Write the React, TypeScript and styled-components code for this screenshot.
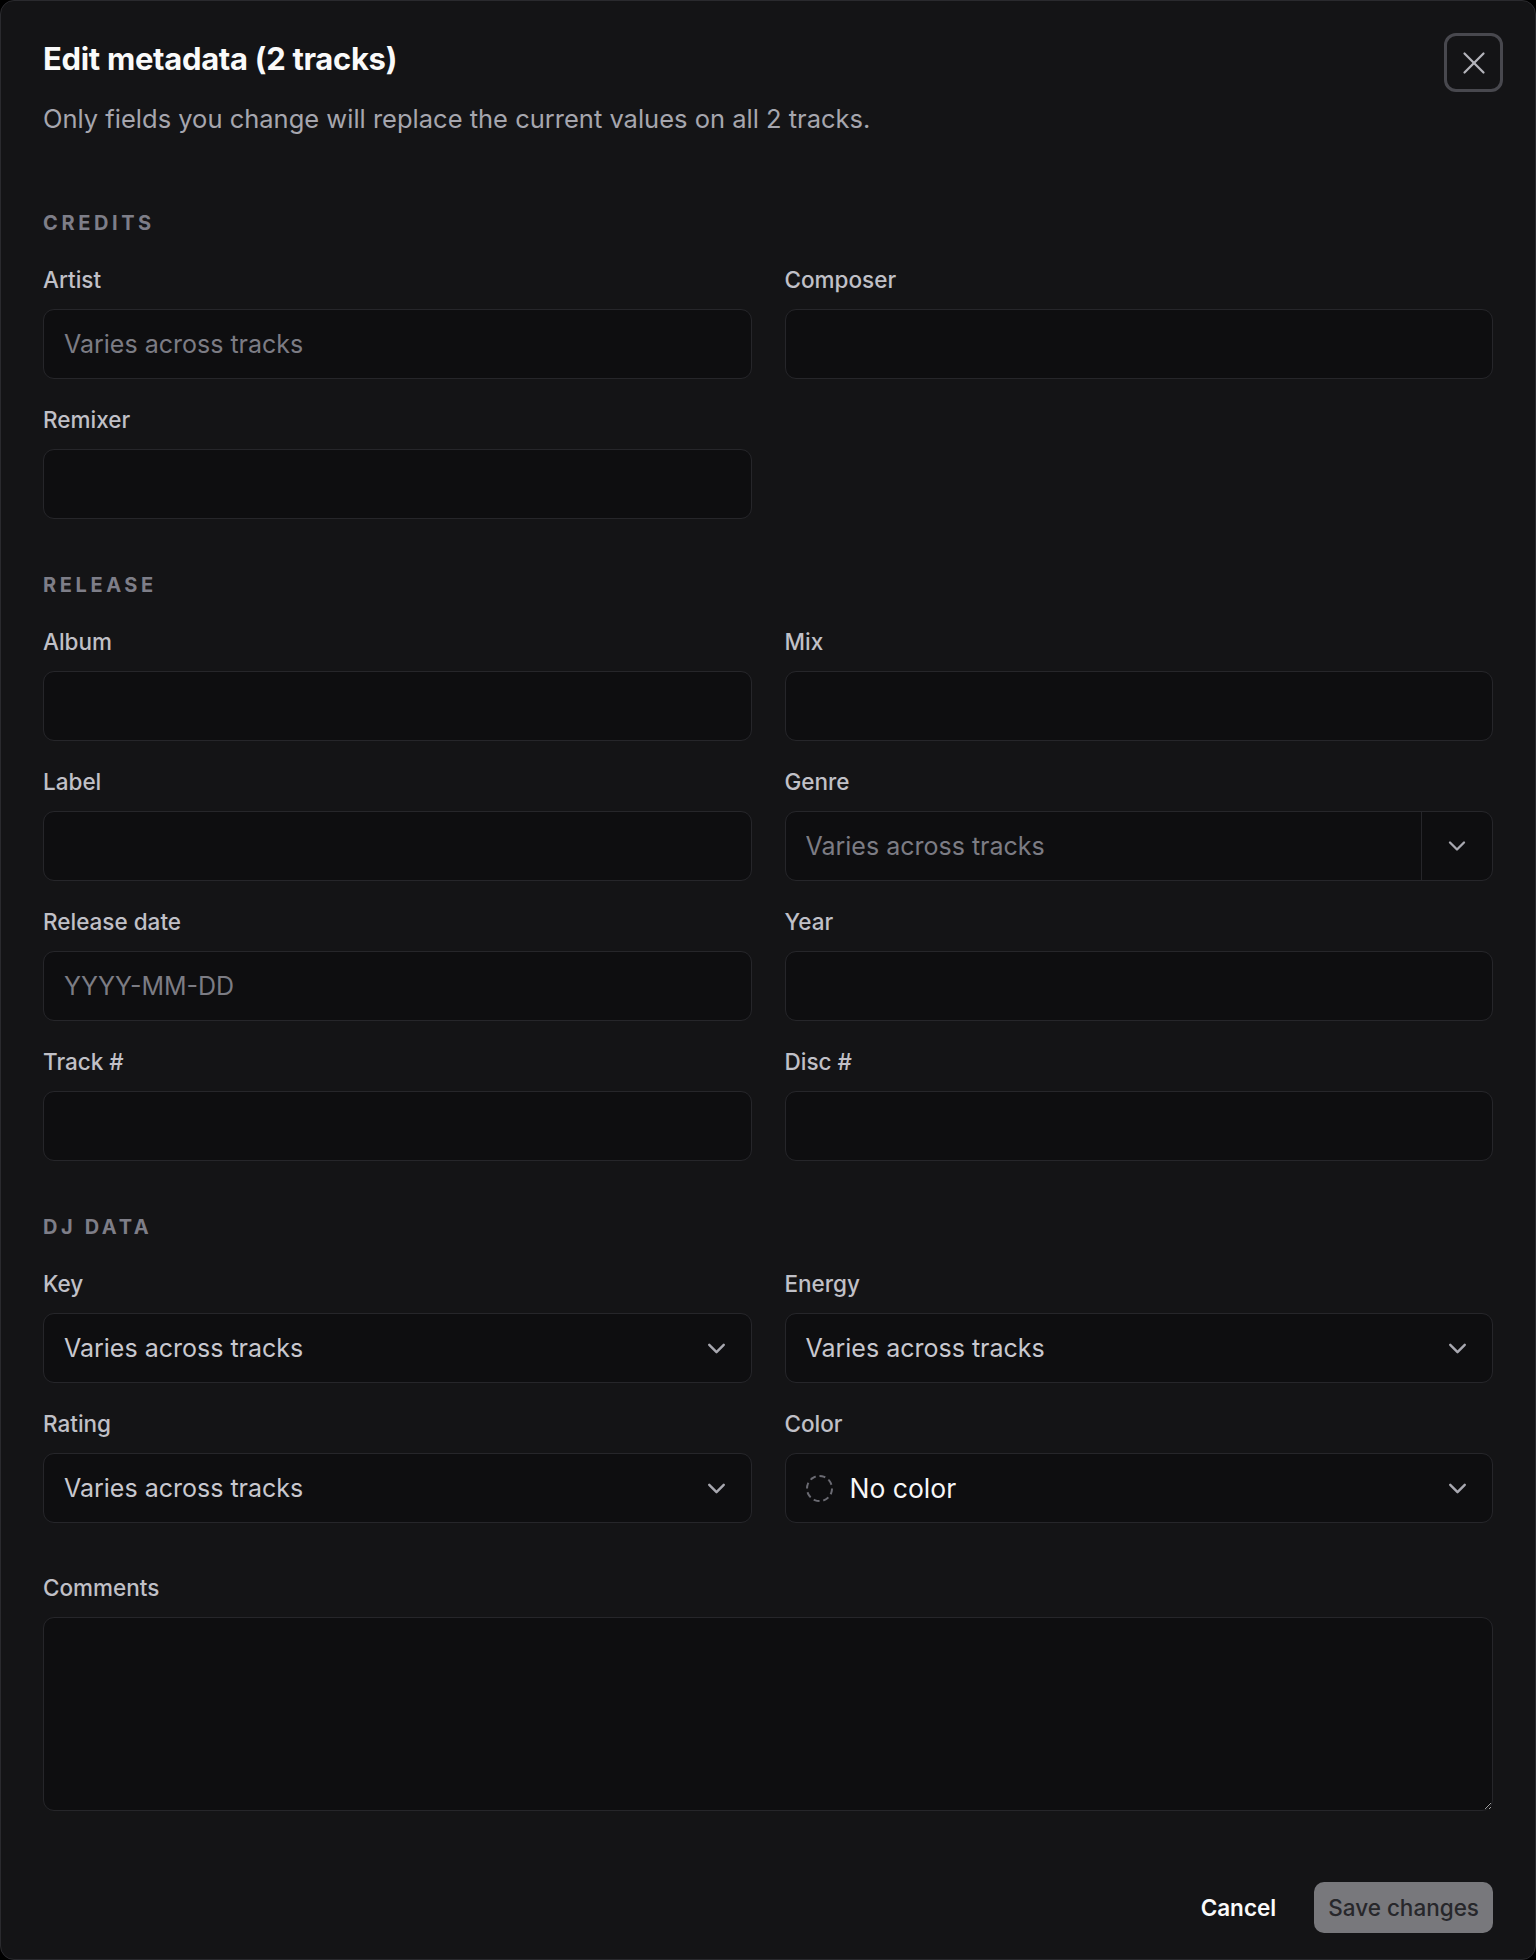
import styled, { createGlobalStyle } from 'styled-components'
import { ChevronDown, X } from 'lucide-react'

const GlobalStyle = createGlobalStyle`
  html, body {
    margin: 0;
    padding: 0;
    background: #000;
  }
  * {
    box-sizing: border-box;
  }
  body {
    font-family: Inter, "Noto Sans", "Liberation Sans", sans-serif;
  }
`

const Dialog = styled.div`
  position: relative;
  width: 1536px;
  height: 1960px;
  padding: 40px 42px 0;
  background: #141416;
  border: 1.5px solid #2a2a2e;
  border-radius: 14px;
  color: #f4f4f5;
`

const Title = styled.h2`
  margin: 0;
  font-size: 31px;
  line-height: 36px;
  font-weight: 700;
  letter-spacing: -0.01em;
  color: #fafafa;
`

const Subtitle = styled.p`
  margin: 26px 0 0;
  font-size: 25.5px;
  line-height: 32px;
  color: #a6a6ae;
`

const CloseButton = styled.button`
  position: absolute;
  top: 32px;
  right: 32px;
  width: 59px;
  height: 59px;
  display: flex;
  align-items: center;
  justify-content: center;
  background: transparent;
  border: 3px solid #48484e;
  border-radius: 12px;
  color: #b4b4bb;
  padding: 0;
`

const Section = styled.section<{ $gap: number }>`
  margin-top: ${(p) => p.$gap}px;
`

const SectionHeader = styled.h3`
  margin: 0 0 31px;
  font-size: 20px;
  line-height: 24px;
  font-weight: 700;
  letter-spacing: 0.18em;
  text-transform: uppercase;
  color: #7e7e88;
`

const Grid = styled.div`
  display: grid;
  grid-template-columns: 1fr 1fr;
  column-gap: 33px;
  row-gap: 27px;
`

const Field = styled.div`
  display: flex;
  flex-direction: column;
  gap: 15px;
`

const Label = styled.label`
  font-size: 22.5px;
  line-height: 28px;
  font-weight: 500;
  color: #c0c0c7;
`

const boxStyles = `
  height: 70px;
  width: 100%;
  background: #0e0e10;
  border: 1.5px solid #26262a;
  border-radius: 11px;
  font-family: inherit;
  font-size: 25px;
`

const Input = styled.input`
  ${boxStyles}
  padding: 0 20px;
  color: #e4e4e7;
  outline: none;

  &::placeholder {
    color: #7c7c84;
  }
`

const Combo = styled.div`
  ${boxStyles}
  display: flex;
  align-items: stretch;
  overflow: hidden;
`

const ComboInput = styled.input`
  flex: 1;
  min-width: 0;
  background: transparent;
  border: none;
  outline: none;
  padding: 0 20px;
  font-family: inherit;
  font-size: 25px;
  color: #e4e4e7;

  &::placeholder {
    color: #7c7c84;
  }
`

const ComboTrigger = styled.button`
  width: 71px;
  display: flex;
  align-items: center;
  justify-content: center;
  background: transparent;
  border: none;
  border-left: 1.5px solid #26262a;
  color: #a8a8b0;
  padding: 0;
`

const Select = styled.button`
  ${boxStyles}
  display: flex;
  align-items: center;
  gap: 17px;
  padding: 0 20px 0 20px;
  text-align: left;
`

const SelectValue = styled.span<{ $bright?: boolean }>`
  flex: 1;
  font-size: ${(p) => (p.$bright ? '26.5px' : '25px')};
  color: ${(p) => (p.$bright ? '#f7f7f8' : '#c8c8cf')};
`

const Chevron = styled(ChevronDown)`
  color: #a8a8b0;
  flex-shrink: 0;
`

const Swatch = styled.span`
  width: 27px;
  height: 27px;
  border-radius: 50%;
  border: 2px dashed #6b6b73;
  flex-shrink: 0;
`

const TextArea = styled.textarea`
  height: 194px;
  width: 100%;
  background: #0e0e10;
  border: 1.5px solid #26262a;
  border-radius: 11px;
  padding: 16px 20px;
  font-family: inherit;
  font-size: 25px;
  color: #e4e4e7;
  outline: none;
  resize: vertical;
`

const Footer = styled.div`
  margin-top: 71px;
  display: flex;
  justify-content: flex-end;
  align-items: center;
  gap: 38px;
`

const GhostButton = styled.button`
  background: transparent;
  border: none;
  padding: 0;
  font-family: inherit;
  font-size: 22.5px;
  font-weight: 600;
  color: #fafafa;
`

const PrimaryButton = styled.button`
  height: 51px;
  padding: 0 14px;
  background: #78787c;
  border: none;
  border-radius: 10px;
  font-family: inherit;
  font-size: 22.5px;
  font-weight: 500;
  color: #27272b;
`

function TextField({ label, placeholder }: { label: string; placeholder?: string }) {
  return (
    <Field>
      <Label>{label}</Label>
      <Input placeholder={placeholder} />
    </Field>
  )
}

function SelectField({ label, value }: { label: string; value: string }) {
  return (
    <Field>
      <Label>{label}</Label>
      <Select type="button">
        <SelectValue>{value}</SelectValue>
        <Chevron size={29} strokeWidth={2} />
      </Select>
    </Field>
  )
}

const VARIES = 'Varies across tracks'

export default function App() {
  return (
    <>
      <GlobalStyle />
      <Dialog>
        <Title>Edit metadata (2 tracks)</Title>
        <Subtitle>Only fields you change will replace the current values on all 2 tracks.</Subtitle>
        <CloseButton type="button" aria-label="Close">
          <X size={38} strokeWidth={1.4} />
        </CloseButton>

        <Section $gap={76}>
          <SectionHeader>Credits</SectionHeader>
          <Grid>
            <TextField label="Artist" placeholder={VARIES} />
            <TextField label="Composer" />
            <TextField label="Remixer" />
          </Grid>
        </Section>

        <Section $gap={54}>
          <SectionHeader>Release</SectionHeader>
          <Grid>
            <TextField label="Album" />
            <TextField label="Mix" />
            <TextField label="Label" />
            <Field>
              <Label>Genre</Label>
              <Combo>
                <ComboInput placeholder={VARIES} />
                <ComboTrigger type="button">
                  <Chevron size={28} strokeWidth={2} />
                </ComboTrigger>
              </Combo>
            </Field>
            <TextField label="Release date" placeholder="YYYY-MM-DD" />
            <TextField label="Year" />
            <TextField label="Track #" />
            <TextField label="Disc #" />
          </Grid>
        </Section>

        <Section $gap={54}>
          <SectionHeader>DJ Data</SectionHeader>
          <Grid>
            <SelectField label="Key" value={VARIES} />
            <SelectField label="Energy" value={VARIES} />
            <SelectField label="Rating" value={VARIES} />
            <Field>
              <Label>Color</Label>
              <Select type="button">
                <Swatch />
                <SelectValue $bright>No color</SelectValue>
                <Chevron size={29} strokeWidth={2} />
              </Select>
            </Field>
          </Grid>
        </Section>

        <Section $gap={51}>
          <Field>
            <Label>Comments</Label>
            <TextArea />
          </Field>
        </Section>

        <Footer>
          <GhostButton type="button">Cancel</GhostButton>
          <PrimaryButton type="button">Save changes</PrimaryButton>
        </Footer>
      </Dialog>
    </>
  )
}
